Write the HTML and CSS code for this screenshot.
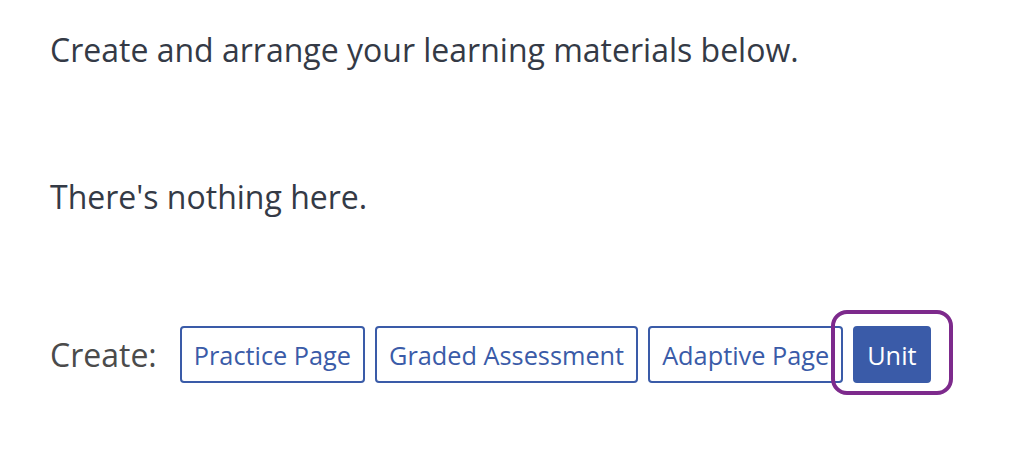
FILE: index.html
```html
<!DOCTYPE html>
<html>
<head>
<meta charset="utf-8">
<link rel="stylesheet" href="styles.css">
</head>
<body>
<main class="page">
  <p class="intro">Create and arrange your learning materials below.</p>
  <p class="empty">There's nothing here.</p>
  <div class="create-row">
    <span class="create-label">Create:</span>
    <button class="btn btn-outline">Practice Page</button>
    <button class="btn btn-outline">Graded Assessment</button>
    <button class="btn btn-outline">Adaptive Page</button>
    <span class="focus-wrap">
      <button class="btn btn-solid">Unit</button>
      <span class="focus-ring"></span>
    </span>
  </div>
</main>
</body>
</html>
```

FILE: styles.css
```css
html, body {
  margin: 0;
  padding: 0;
  background: #ffffff;
}
body {
  min-height: 452px;
}
.page {
  font-family: "Open Sans", "Noto Sans", sans-serif;
  padding: 28px 0 60px 50px;
}
.intro, .empty {
  margin: 0;
  font-size: 32px;
  line-height: 44px;
  color: #343a46;
}
.empty {
  margin-top: 103px;
}
.create-row {
  display: flex;
  align-items: center;
  margin-top: 107px;
}
.create-label {
  font-size: 32px;
  color: #4b4b4b;
  margin-right: 23px;
}
.btn {
  font-family: "Open Sans", "Noto Sans", sans-serif;
  font-size: 25.3px;
  line-height: 36px;
  height: 57px;
  padding: 0 12px;
  border-radius: 4px;
  border: 2px solid #3a5ba8;
  margin-right: 10px;
  cursor: pointer;
}
.btn-outline {
  background: #ffffff;
  color: #3a5ba8;
}
.btn-solid {
  background: #3a5ba8;
  color: #ffffff;
  margin-right: 0;
}
.focus-wrap {
  position: relative;
  display: inline-flex;
}
.focus-ring {
  position: absolute;
  left: -22px;
  top: -16px;
  width: 114px;
  height: 77px;
  border: 4px solid #7d2a8c;
  border-radius: 16px;
  pointer-events: none;
}
```
